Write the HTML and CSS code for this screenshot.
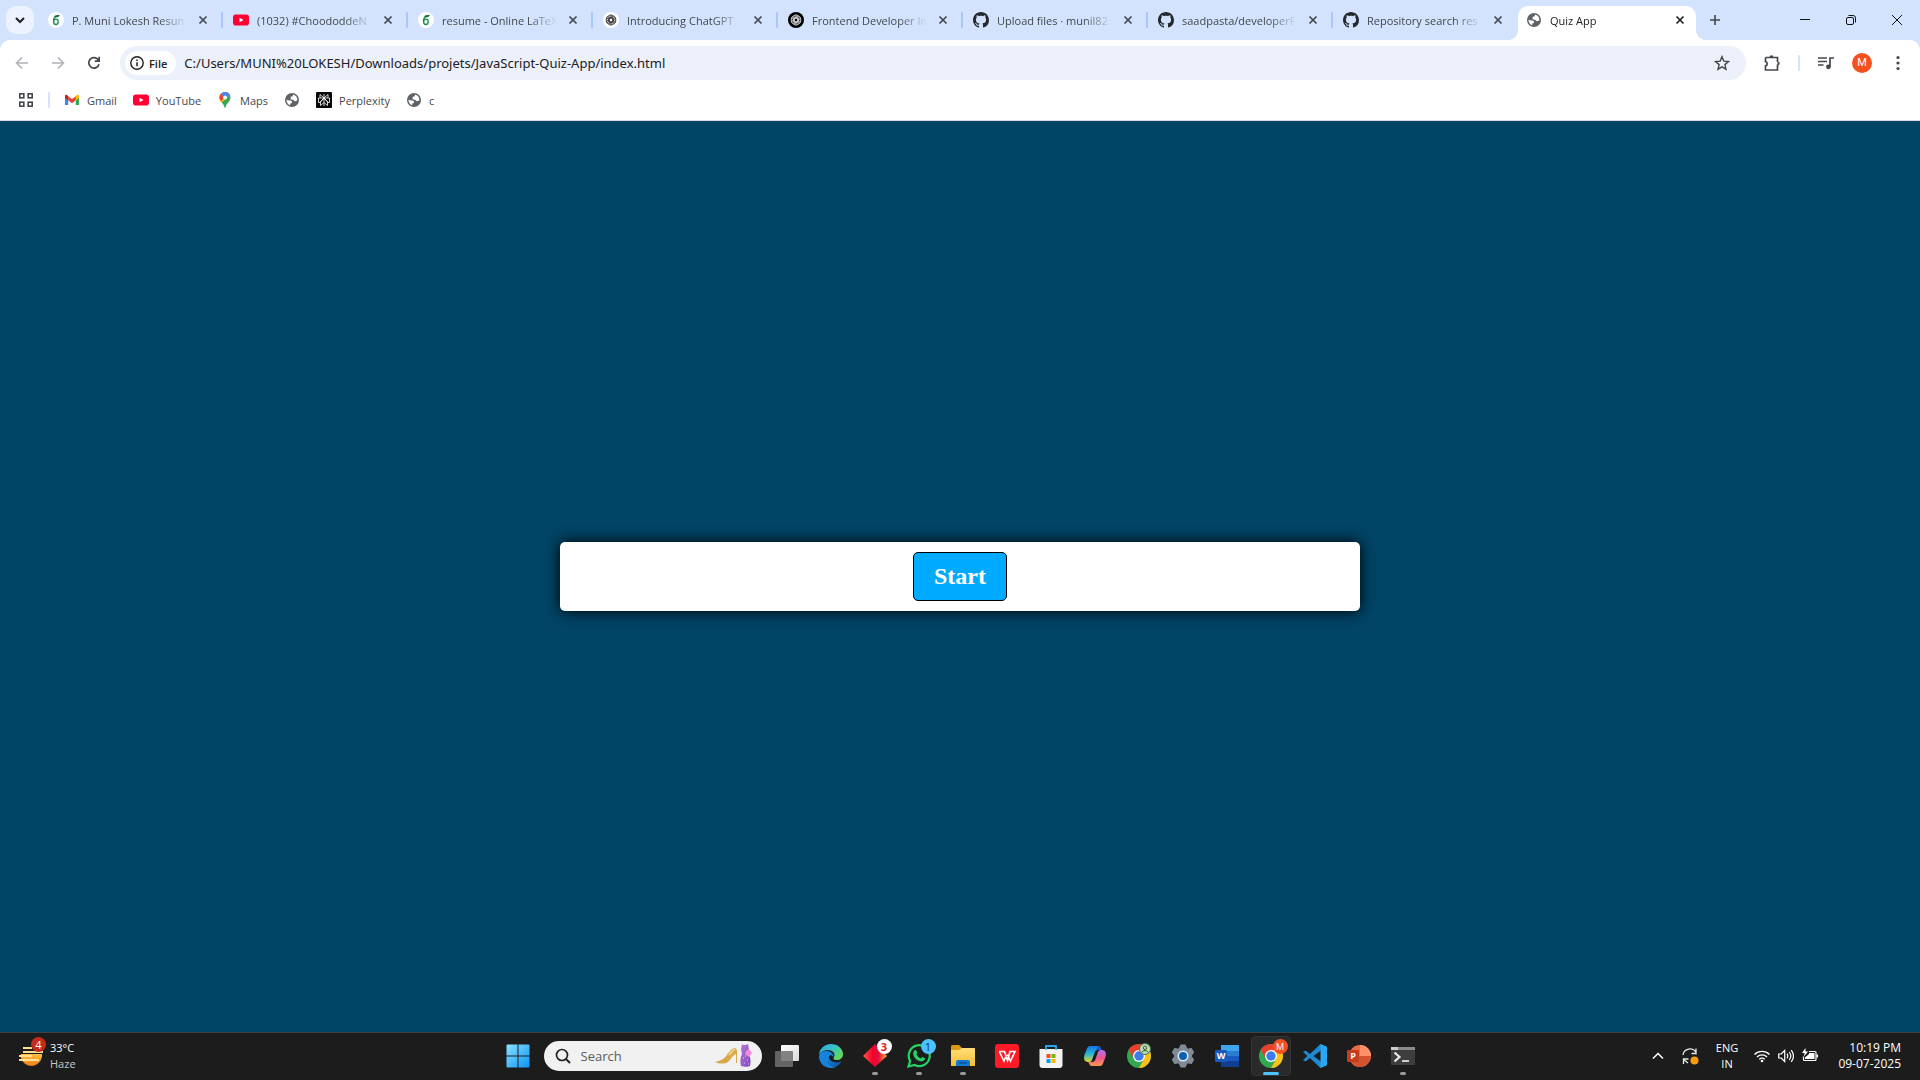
FILE: index.html
```html
<!DOCTYPE html>
<html lang="en">
<head>
<meta charset="utf-8">
<meta name="viewport" content="width=device-width, initial-scale=1">
<title>Quiz App</title>
<link rel="stylesheet" href="styles.css">
</head>
<body>
<svg class="sprite" aria-hidden="true">
  <defs>
    <linearGradient id="win" x1="0" y1="0" x2="1" y2="1"><stop offset="0" stop-color="#8ae2ff"/><stop offset="1" stop-color="#0a94f5"/></linearGradient>
    <linearGradient id="edgeTop" x1="0" y1="0" x2="1" y2="0.6"><stop offset="0" stop-color="#2aa8e0"/><stop offset=".55" stop-color="#35c3c8"/><stop offset="1" stop-color="#62d957"/></linearGradient>
    <linearGradient id="edgeLow" x1="0" y1="0" x2="1" y2="1"><stop offset="0" stop-color="#1c8fe0"/><stop offset="1" stop-color="#0c4f9e"/></linearGradient>
    <linearGradient id="diamond" x1="0" y1="0" x2="1" y2="0"><stop offset="0" stop-color="#ff5a4a"/><stop offset=".4" stop-color="#f5002e"/><stop offset=".65" stop-color="#e0103c"/><stop offset="1" stop-color="#ffb02a"/></linearGradient>
    <linearGradient id="folder" x1="0" y1="0" x2="0" y2="1"><stop offset="0" stop-color="#ffdf7a"/><stop offset="1" stop-color="#f6bd33"/></linearGradient>
    <linearGradient id="cpA" x1="0" y1="0" x2="0" y2="1"><stop offset="0" stop-color="#1573e6"/><stop offset=".5" stop-color="#25b8d4"/><stop offset="1" stop-color="#e7d32c"/></linearGradient>
    <linearGradient id="cpB" x1="0" y1="0" x2="0" y2="1"><stop offset="0" stop-color="#b16df0"/><stop offset=".5" stop-color="#f0568f"/><stop offset="1" stop-color="#ff9a4c"/></linearGradient>
    <linearGradient id="haze" x1="0" y1="0" x2="0" y2="1"><stop offset="0" stop-color="#ffc23c"/><stop offset="1" stop-color="#f07d1a"/></linearGradient>
    <linearGradient id="dress" x1="0" y1="0" x2="1" y2="1"><stop offset="0" stop-color="#b877dc"/><stop offset="1" stop-color="#7c4bb8"/></linearGradient>
    <linearGradient id="front" x1="0" y1="0" x2="1" y2="1"><stop offset="0" stop-color="#fff"/><stop offset="1" stop-color="#dcdcdc"/></linearGradient>
  </defs>
  <symbol id="i-close" viewBox="0 0 16 16"><path d="M4.500 4.500l7 7m0-7l-7 7" stroke="currentColor" stroke-width="1.700" fill="none"/></symbol>
  <symbol id="i-leaf" viewBox="0 0 16 16"><circle cx="8" cy="8" r="8" fill="#fff"/><ellipse cx="7.900" cy="9.800" rx="2.300" ry="2.700" fill="none" stroke="#138a4b" stroke-width="1.300"/><path d="M5.500 9.700C5.200 6.800 6.800 4.700 9.500 3.900" stroke="#138a4b" stroke-width="1.300" fill="none"/><path d="M6 4.300C7.500 2.600 9.500 3.400 11.800 2.700c-.3 1.700-2 2.800-4.300 2.600z" fill="#0d6b38"/></symbol>
  <symbol id="i-youtube" viewBox="0 0 16 16"><rect y="2.500" width="16" height="11" rx="2.800" fill="#ff0033"/><path d="M6.500 5.700v4.600L10.500 8z" fill="#fff"/></symbol>
  <symbol id="i-knot" viewBox="0 0 16 16"><g fill="none" stroke="currentColor" stroke-width=".7"><path id="petal" d="M8 5.900l2.300 1.300V10.500a2.300 2.300 0 0 1-4 1.700M8 5.900L5 7.600v3.200"/><use href="#petal" transform="rotate(60 8 8)"/><use href="#petal" transform="rotate(120 8 8)"/><use href="#petal" transform="rotate(180 8 8)"/><use href="#petal" transform="rotate(240 8 8)"/><use href="#petal" transform="rotate(300 8 8)"/><circle cx="8" cy="8" r="4.900"/></g></symbol>
  <symbol id="i-github" viewBox="0 0 16 16"><path fill="#24292f" d="M8 0C3.580 0 0 3.580 0 8c0 3.540 2.290 6.530 5.470 7.590.4.070.55-.17.550-.38 0-.19-.01-.82-.01-1.490-2.010.37-2.530-.49-2.690-.94-.09-.23-.48-.94-.82-1.130-.28-.15-.68-.52-.01-.53.63-.01 1.080.58 1.230.82.72 1.210 1.870.87 2.330.66.070-.52.280-.87.510-1.070-1.780-.2-3.640-.89-3.640-3.950 0-.87.310-1.590.82-2.150-.08-.2-.36-1.020.080-2.120 0 0 .67-.21 2.200.82.640-.18 1.320-.27 2-.27s1.360.090 2 .27c1.530-1.040 2.200-.82 2.200-.82.440 1.100.16 1.920.080 2.120.51.560.82 1.270.82 2.150 0 3.070-1.870 3.750-3.650 3.950.29.250.540.730.540 1.480 0 1.070-.01 1.930-.01 2.200 0 .21.150.46.550.38A8.010 8.010 0 0 0 16 8c0-4.420-3.580-8-8-8z"/></symbol>
  <symbol id="i-globe" viewBox="0 0 16 16"><circle cx="8" cy="8" r="7" fill="#5f6368"/><path fill="#fff" d="M8.800 2.500C9.200 3.900 8.700 4.500 7.600 4.600c-.9.100-1 .7-.8 1.500.2.700-.2 1-1.100 1.200 1 .4 3.300.1 4 1 .6.900 1.500 1 2.400.8.600-.1.900-.5 1.300-1 0-3-1.800-5.100-4.600-5.600zM2.500 7.500c1 .7 2.100 1.100 3.600 1.100 1.200 0 1.900.7 1.900 1.700 0 .7-.5.900-1.200 1-.5.100-.7.700-.6 1.900-2.200-.6-3.900-3-3.700-5.700z"/></symbol>
  <symbol id="i-chrome" viewBox="0 0 24 24"><circle cx="12" cy="12" r="12" fill="#33a852"/><path d="M12 12L1.610 6A12 12 0 0 1 22.390 6z" fill="#e8402f"/><path d="M12 6h10.390A12 12 0 0 1 12 24l5.200-9z" fill="#fbc116"/><path d="M1.610 6L6.800 15 12 12V6z" fill="#e8402f"/><path d="M1.610 6L6.800 15 12 17.400 9 22 1 16z" fill="#33a852"/><circle cx="12" cy="12" r="6" fill="#fff"/><circle cx="12" cy="12" r="4.700" fill="#3b7ded"/></symbol>
</svg>

<div class="window">
  <header class="chrome">
    <div class="tabstrip">
      <button class="tab-search" aria-label="Search tabs"><svg class="i16" viewBox="0 0 16 16"><path d="M4 6l4 4 4-4" fill="none" stroke="#202124" stroke-width="2"/></svg></button>
      <nav class="tabs" aria-label="Open tabs">
        <div class="tab"><svg class="i16"><use href="#i-leaf"/></svg><span class="tab-title">P. Muni Lokesh Resun</span><button class="tab-close" aria-label="Close"><svg class="i16"><use href="#i-close"/></svg></button></div>
        <div class="tab"><svg class="i16"><use href="#i-youtube"/></svg><span class="tab-title">(1032) #ChoododdeN</span><button class="tab-close" aria-label="Close"><svg class="i16"><use href="#i-close"/></svg></button></div>
        <div class="tab"><svg class="i16"><use href="#i-leaf"/></svg><span class="tab-title">resume - Online LaTeX</span><button class="tab-close" aria-label="Close"><svg class="i16"><use href="#i-close"/></svg></button></div>
        <div class="tab"><svg class="i16 knot"><use href="#i-knot"/></svg><span class="tab-title">Introducing ChatGPT</span><button class="tab-close" aria-label="Close"><svg class="i16"><use href="#i-close"/></svg></button></div>
        <div class="tab"><svg class="i16 knot knot-dark"><use href="#i-knot"/></svg><span class="tab-title">Frontend Developer In</span><button class="tab-close" aria-label="Close"><svg class="i16"><use href="#i-close"/></svg></button></div>
        <div class="tab"><svg class="i16"><use href="#i-github"/></svg><span class="tab-title">Upload files · munil82</span><button class="tab-close" aria-label="Close"><svg class="i16"><use href="#i-close"/></svg></button></div>
        <div class="tab"><svg class="i16"><use href="#i-github"/></svg><span class="tab-title">saadpasta/developerF</span><button class="tab-close" aria-label="Close"><svg class="i16"><use href="#i-close"/></svg></button></div>
        <div class="tab"><svg class="i16"><use href="#i-github"/></svg><span class="tab-title">Repository search res</span><button class="tab-close" aria-label="Close"><svg class="i16"><use href="#i-close"/></svg></button></div>
        <div class="tab active"><svg class="i16"><use href="#i-globe"/></svg><span class="tab-title">Quiz App</span><button class="tab-close" aria-label="Close"><svg class="i16"><use href="#i-close"/></svg></button></div>
      </nav>
      <button class="new-tab" aria-label="New tab"><svg class="i16" viewBox="0 0 16 16"><path d="M8 3v10M3 8h10" stroke="#43474e" stroke-width="1.600"/></svg></button>
      <div class="window-controls">
        <button aria-label="Minimize"><svg class="i16" viewBox="0 0 16 16"><path d="M3 7.500h10" stroke="#111"/></svg></button>
        <button aria-label="Restore"><svg class="i16" viewBox="0 0 16 16"><g fill="none" stroke="#111"><rect x="3.500" y="5.500" width="7" height="7" rx="1.500"/><path d="M5.500 3.500h4.500a2.500 2.500 0 0 1 2.500 2.500v4.500"/></g></svg></button>
        <button aria-label="Close window"><svg class="i16" viewBox="0 0 16 16"><path d="M3 3l10 10M13 3L3 13" stroke="#111"/></svg></button>
      </div>
    </div>

    <div class="toolbar">
      <div class="nav-buttons">
        <button class="muted" aria-label="Back"><svg class="i16" viewBox="0 0 16 16"><path d="M14 8H3M8 2.500L2.500 8 8 13.500" fill="none" stroke="currentColor" stroke-width="1.600"/></svg></button>
        <button class="muted" aria-label="Forward"><svg class="i16" viewBox="0 0 16 16"><path d="M2 8h11M8 2.500L13.500 8 8 13.500" fill="none" stroke="currentColor" stroke-width="1.600"/></svg></button>
        <button aria-label="Reload"><svg class="i16" viewBox="0 0 16 16"><path d="M13 9.200A5.200 5.200 0 1 1 12.300 5M13.200 1.800v4.400H8.800" fill="none" stroke="currentColor" stroke-width="1.700"/></svg></button>
      </div>
      <div class="omnibox">
        <button class="chip"><svg class="i14" viewBox="0 0 14 14"><circle cx="7" cy="7" r="6.200" fill="none" stroke="#202124" stroke-width="1.400"/><path d="M7 6.200v4M7 3.500v1.500" stroke="#202124" stroke-width="1.500"/></svg>File</button>
        <input class="url" type="text" aria-label="Address" value="C:/Users/MUNI%20LOKESH/Downloads/projets/JavaScript-Quiz-App/index.html">
        <button class="star" aria-label="Bookmark this page"><svg class="i16" viewBox="0 0 16 16"><path d="M8 1.700l1.800 4.400 4.700.4-3.600 3.100 1.100 4.600L8 11.800l-4 2.400 1.100-4.600L1.500 6.500l4.700-.4z" fill="none" stroke="#43474e" stroke-width="1.400"/></svg></button>
      </div>
      <div class="tools">
        <button aria-label="Extensions"><svg class="i18" viewBox="0 0 18 18"><path d="M2.500 3.500h12V8M14.500 10.500v5.500h-12v-4.200c2.300-.3 2.300-3.800 0-4.100V3.500" fill="none" stroke="#43474e" stroke-width="1.700"/><path d="M6.500 3.500a2 2.200 0 0 1 4 0zM14.500 7.500a2.200 2 0 0 1 0 4z" fill="#43474e"/></svg></button>
        <span class="divider"></span>
        <button aria-label="Media controls"><svg class="i16" viewBox="0 0 16 16"><path d="M0 3h9M0 6.500h9M0 10h5.500M12 12V3h4" fill="none" stroke="#43474e" stroke-width="1.700"/><circle cx="10.400" cy="11.800" r="2.400" fill="#43474e"/></svg></button>
        <button aria-label="Profile"><span class="avatar">M</span></button>
        <button aria-label="Menu"><svg class="i16" viewBox="0 0 16 16"><g fill="#43474e"><circle cx="8" cy="2.500" r="1.600"/><circle cx="8" cy="8" r="1.600"/><circle cx="8" cy="13.500" r="1.600"/></g></svg></button>
      </div>
    </div>

    <nav class="bookmarks" aria-label="Bookmarks">
      <button class="apps" aria-label="Apps"><svg class="i16" viewBox="0 0 16 16"><g fill="none" stroke="#43474e" stroke-width="1.600"><rect x="1.800" y="1.800" width="4" height="4"/><rect x="10.200" y="1.800" width="4" height="4"/><rect x="1.800" y="10.200" width="4" height="4"/><rect x="10.200" y="10.200" width="4" height="4"/></g></svg></button>
      <span class="divider"></span>
      <a href="#gmail"><svg class="i16" viewBox="0 0 16 16"><path d="M1 4v9h3.200V6.500z" fill="#4285f4"/><path d="M15 4v9h-3.200V6.500z" fill="#34a853"/><path d="M11.800 4.200V8.300L15 5.900V4c0-1.600-1.800-1.900-3.200 0z" fill="#fbbc04"/><path d="M1 4v1.900l3.200 2.400V4.200C3 2.400 1 2.400 1 4z" fill="#c5221f"/><path d="M4.200 4.200v4.100L8 11.200l3.800-2.900V4.200L8 7z" fill="#ea4335"/></svg>Gmail</a>
      <a href="#youtube"><svg class="i16"><use href="#i-youtube"/></svg>YouTube</a>
      <a href="#maps"><svg class="i16" viewBox="0 0 16 16"><path d="M2.500 5.500a5.500 5.500 0 0 1 11 0c0 4-4.200 5.500-5 10-.2.600-.8.600-1 0-.8-4.500-5-6-5-10z" fill="#34a853"/><path d="M8 0a5.500 5.500 0 0 1 5.200 3.700L4.600 10.500C3.500 9 2.500 7.500 2.500 5.500 2.500 2.300 5 0 8 0z" fill="#fbbc04"/><path d="M8 0a5.500 5.500 0 0 1 5.200 3.700L8 7.500 3.800 2A5.500 5.500 0 0 1 8 0z" fill="#4285f4"/><path d="M3.800 2L8 5.500 4 9C3 7.800 2.500 7 2.500 5.500c0-1.400.5-2.600 1.300-3.500z" fill="#ea4335"/><circle cx="8" cy="5.500" r="2" fill="#fff"/></svg>Maps</a>
      <a href="#site" aria-label="Site"><svg class="i16"><use href="#i-globe"/></svg></a>
      <a href="#perplexity"><svg class="i16" viewBox="0 0 16 16"><rect width="16" height="16" rx="1" fill="#080808"/><g fill="none" stroke="#fff" stroke-width=".8"><path d="M8 2v12M8 6L4 2.500V6h8V2.500L8 6M8 6l-4.500 4.500M8 6l4.500 4.500M4.500 13.500V10L8 6.500l3.500 3.500v3.500L8 10.500zM4.500 10.500h-2V6H4M11.500 10.500h2V6H12"/></g></svg>Perplexity</a>
      <a href="#c"><svg class="i16"><use href="#i-globe"/></svg>c</a>
    </nav>
  </header>

  <main class="page">
    <section class="quiz-card"><button class="start-quiz">Start</button></section>
  </main>

  <footer class="taskbar">
    <button class="weather">
      <span class="weather-icon"><svg class="i26" viewBox="0 0 26 26"><path d="M3 11h21a11 11 0 0 1-10 12A11 10 0 0 1 3 15z" fill="url(#haze)"/><path d="M5 5h9M5 9h20M1 13h13M1 17h20" stroke="#ffdf94" stroke-width="1.800"/></svg><span class="badge red">4</span></span>
      <span class="weather-text"><span>33°C</span><span class="dim">Haze</span></span>
    </button>

    <div class="apps-row">
      <button class="app" aria-label="Start menu"><svg class="i24" viewBox="0 0 24 24"><path fill="url(#win)" d="M1.500 .5H11.500v11H.5V1.500a1 1 0 0 1 1-1zM12.500 .5h10a1 1 0 0 1 1 1v10h-11zM.5 12.500h11v11h-10a1 1 0 0 1-1-1zM12.500 12.500h11v10a1 1 0 0 1-1 1h-10z"/></svg></button>
      <label class="search">
        <svg class="i16" viewBox="0 0 16 16"><circle cx="7" cy="7" r="5.500" fill="none" stroke="#222" stroke-width="1.700"/><path d="M11 11l4 4" stroke="#222" stroke-width="2"/></svg>
        <input type="text" placeholder="Search" aria-label="Search">
        <svg class="fashion" viewBox="0 0 40 24"><path d="M1 18c5-1 9-3 12-7 2-3 5-7 8-7 2 1 2 2 2 4v11h-1v-9c-3 1-5 5-8 8-3 2-9 2-13 0z" fill="#dba94b"/><path d="M15 11c2-2 3-4 6-6" stroke="#f4d992" stroke-width="1.500" fill="none"/><path d="M28 0c1 1.500 4 1.500 6 0l1 6-1 4c3 3 3 8 2 12-2 1-6 1-9 0-1-4-1-8 1-12l-1-5z" fill="url(#dress)"/><path d="M33 6c2-1 4 0 5 3l-3 4-4-3z" fill="#f08edc"/><path d="M29 14h1M33 16h1M30 19h1M34 20h1M31 12h1" stroke="#e3c5f7" stroke-width="1"/></svg>
      </label>
      <button class="app" aria-label="Task view"><svg class="i24" viewBox="0 0 24 24"><rect x="6" y="1" width="18" height="16" rx="1" fill="url(#front)"/><rect y="7" width="18" height="16" rx="1" fill="#707070" fill-opacity=".86"/></svg></button>
      <button class="app" aria-label="Edge"><svg class="i24" viewBox="0 0 24 24"><path d="M0 12C0 5 5 0 12 0s12 5 12 10c0 4-3 6-6 6-4 0-4-2-3-3 2-4-2-7-6-7-5 0-9 3-9 6z" fill="url(#edgeTop)"/><path d="M0 12c1-4 4-5 7-5 5 0 8 3 7 6-1-3-6-2-6 2 0 5 5 8 9 8-2 1-4 1-5 1C5 24 0 19 0 12z" fill="#1583dc"/><path d="M9 11c-4 6 1 12 7 12 3-1 5-3 7-6-5 3-13 1-13-4 0-1 1-2 2-3-1 0-2 0-3 1z" fill="url(#edgeLow)"/></svg></button>
      <button class="app running" aria-label="Diamond"><svg class="i24" viewBox="0 0 24 24"><path d="M12 0l12 12-12 11L0 12z" fill="url(#diamond)"/></svg><span class="badge white">3</span></button>
      <button class="app running" aria-label="WhatsApp"><svg class="i24" viewBox="0 0 24 24"><path d="M1.500 22.500l1.600-5.700A10.500 10.500 0 1 1 7.500 21z" fill="none" stroke="#25d366" stroke-width="2.200"/><path d="M7.500 6.500c.7-.7 1.500-.6 1.900.2l.9 2-1 1.500c1 2 2.500 3.300 4.500 4.200l1.500-1.500 2.300 1.200c.7.400.4 1.400-.1 2-3 3-7.800.4-9.500-2C6 11.500 5.500 8.500 7.500 6.500z" fill="#25d366"/></svg><span class="badge blue">1</span></button>
      <button class="app running" aria-label="File Explorer"><svg class="i24" viewBox="0 0 24 24"><path d="M0 2.500A1.500 1.500 0 0 1 1.500 1H8l3 3h11.500A1.500 1.500 0 0 1 24 5.500V9H0z" fill="#dc9a12"/><path d="M0 6h8l3-2h12a1 1 0 0 1 1 1v17H0z" fill="url(#folder)"/><path d="M5 22v-4a2 2 0 0 1 2-2h10a2 2 0 0 1 2 2v4z" fill="#117ad1"/><path d="M8 19h8" stroke="#0b4f94" stroke-width="1.500"/></svg></button>
      <button class="app" aria-label="WPS Office"><svg class="i24" viewBox="0 0 24 24"><rect width="24" height="24" rx="3" fill="#ff1a28"/><path d="M4 7.500h5.500l3 9 2.500-9h5l-4.500 9.500-3-6.500M4.500 8l4.500 9 2.500-6" fill="none" stroke="#fff" stroke-width="1.600"/></svg></button>
      <button class="app" aria-label="Microsoft Store"><svg class="i24" viewBox="0 0 24 24"><path d="M7 6V2.500A.5.500 0 0 1 7.500 2h9a.5.500 0 0 1 .5.500V6" fill="none" stroke="#26a4ed" stroke-width="1.800"/><path d="M.5 5h23v16a3 3 0 0 1-3 3h-17a3 3 0 0 1-3-3z" fill="#f2f2f2"/><path d="M7 1v5M17 1v5" stroke="#26a4ed" stroke-width="1.500"/><path d="M7.500 10h4v4h-4z" fill="#f05022"/><path d="M12.500 10h4v4h-4z" fill="#7cb800"/><path d="M7.500 15h4v4h-4z" fill="#00a3ee"/><path d="M12.500 15h4v4h-4z" fill="#fcb500"/></svg></button>
      <button class="app" aria-label="Copilot"><svg class="i24" viewBox="0 0 24 24"><path d="M7 2h8c2 0 3 2 3.500 4H15c-2 0-3 1-3.500 3L9 16c-1 2-2 2-4 2-4 0-4.500-4-3.500-7L4 4.500C4.500 3 5.500 2 7 2z" fill="url(#cpA)"/><path d="M17 22H9c-2 0-3-2-3.500-4H9c2 0 3-1 3.500-3L15 8c1-2 2-2 4-2 4 0 4.500 4 3.500 7L20 19.500c-.5 1.500-1.500 2.500-3 2.500z" fill="url(#cpB)"/><path d="M15 2c2 0 3 2 3.500 4H15c-1.500 0-2.500.5-3 2z" fill="#1658cc"/></svg></button>
      <button class="app" aria-label="Chrome"><svg class="i24"><use href="#i-chrome"/></svg><svg class="person" viewBox="0 0 12 12"><circle cx="6" cy="6" r="5.500" fill="#bfdcb8" stroke="#4a7548"/><circle cx="6" cy="4.800" r="1.700" fill="none" stroke="#365c35"/><path d="M2.700 9.500c1-2.500 5.600-2.500 6.600 0" fill="none" stroke="#365c35"/></svg></button>
      <button class="app" aria-label="Settings"><svg class="i24" viewBox="0 0 24 24"><g fill="#7f8b96"><circle cx="12" cy="12" r="9"/><path id="tooth" d="M8 4L9.500 .5h5L16 4zM8 20l1.500 3.500h5L16 20z"/><use href="#tooth" transform="rotate(60 12 12)"/><use href="#tooth" transform="rotate(120 12 12)"/></g><circle cx="12" cy="12" r="5.500" fill="#e3eaf0"/><circle cx="12" cy="12" r="4" fill="#0c62b0"/></svg></button>
      <button class="app" aria-label="Word"><svg class="i24" viewBox="0 0 24 24"><path d="M6 1h18v6H6z" fill="#41a5ee"/><path d="M6 7h18v5H6z" fill="#2b7cd3"/><path d="M6 12h18v5H6z" fill="#185abd"/><path d="M6 17h18v6H6z" fill="#103f91"/><rect y="6" width="12" height="12" rx="1" fill="#185abd"/><text x="6" y="15" class="glyph">W</text></svg></button>
      <button class="app current" aria-label="Chrome, profile M"><svg class="i24"><use href="#i-chrome"/></svg><span class="badge orange">M</span></button>
      <button class="app" aria-label="Visual Studio Code"><svg class="i24" viewBox="0 0 24 24"><path d="M17.500 0L24 3v18l-6.500 3L7 14 2.500 17.500 0 16l4.500-4L0 8l2.500-1.500L7 10zM18 6.500L10.500 12l7.500 5.500z" fill="#1f8ad2" fill-rule="evenodd"/><path d="M17.500 0L24 3v18l-6.500 3z" fill="#2aa7f2"/></svg></button>
      <button class="app" aria-label="PowerPoint"><svg class="i24" viewBox="0 0 24 24"><circle cx="13" cy="12" r="11" fill="#ed6c47"/><path d="M13 1a11 11 0 0 1 11 11H13z" fill="#ff8f6b"/><path d="M2 12h22a11 11 0 0 1-22 0z" fill="#d35230"/><rect y="6" width="12" height="12" rx="1" fill="#c43e1c"/><text x="6" y="15" class="glyph">P</text></svg></button>
      <button class="app running" aria-label="Terminal"><svg class="i24" viewBox="0 0 24 24"><rect y="3" width="24" height="18" rx="1" fill="#3d3d3d"/><path d="M0 3h24v3H0z" fill="#8a8a8a"/><path d="M0 3h7v3H0z" fill="#ccc"/><path d="M3.500 8.500l5 4.500-5 4.500" fill="none" stroke="#e8e8e8" stroke-width="2.200"/><path d="M11 17h7" stroke="#fff" stroke-width="1.500"/></svg></button>
    </div>

    <div class="tray">
      <button class="tray-button" aria-label="Show hidden icons"><svg class="i16" viewBox="0 0 16 16"><path d="M3 10.500l5-5 5 5" fill="none" stroke="#fff" stroke-width="1.500"/></svg></button>
      <button class="tray-button" aria-label="Updates"><svg class="i18" viewBox="0 0 18 18"><path d="M2 8a7 7 0 0 1 13-2.500V1.500M15.500 6.500h-5M2.500 17v-5h5M2.500 12.500L7 16" fill="none" stroke="#e8e8e8" stroke-width="1.300"/><circle cx="13.500" cy="13.500" r="4" fill="#ff9a0c"/></svg></button>
      <button class="lang"><span>ENG</span><span>IN</span></button>
      <button class="status" aria-label="Network, volume and battery">
        <svg class="i16" viewBox="0 0 16 16"><path d="M.5 6.500a10.600 10.600 0 0 1 15 0M3 9a7 7 0 0 1 10 0M5.300 11.300a3.800 3.800 0 0 1 5.400 0" fill="none" stroke="#fff" stroke-width="1.300"/><circle cx="8" cy="13" r="1.300" fill="#fff"/></svg>
        <svg class="i16" viewBox="0 0 16 16"><path d="M.7 6v4h2.500L6.700 13.500v-11L3.200 6zM9 5.700c1 1.500 1 3.100 0 4.600M11.200 4c2 2.500 2 5.500 0 8M13.200 2.200c2.800 3.500 2.800 8 0 11.600" fill="none" stroke="#fff" stroke-width="1.200"/></svg>
        <svg class="i16" viewBox="0 0 16 16"><path d="M7 3.500h6a1 1 0 0 1 1 1v7a1 1 0 0 1-1 1H2.500a1 1 0 0 1-1-1V8.500" fill="none" stroke="#fff" stroke-width="1.200"/><path d="M7 5h5.500v6H3V9.500L7 6z" fill="#fff"/><path d="M14.500 6.500H16v3h-1.500z" fill="#fff"/><path d="M3.500 0L0 5h2.500L2 8.500 6 3.500H3.500z" fill="#fff"/></svg>
      </button>
      <button class="clock"><span>10:19 PM</span><span>09-07-2025</span></button>
    </div>
  </footer>
</div>
</body>
</html>
```
FILE: styles.css
```css
* { box-sizing: border-box; }

body {
  margin: 0;
  font-family: "Open Sans", "Noto Sans", sans-serif;
  font-size: 11px;
  color: #202124;
}

button {
  display: flex;
  align-items: center;
  justify-content: center;
  margin: 0;
  padding: 0;
  border: 0;
  background: none;
  color: inherit;
  font: inherit;
}

input {
  min-width: 0;
  padding: 0;
  border: 0;
  outline: 0;
  background: none;
  color: inherit;
  font: inherit;
}

svg { display: block; flex: none; }
.sprite { position: absolute; width: 0; height: 0; }
.i14 { width: 14px; height: 14px; }
.i16 { width: 16px; height: 16px; }
.i18 { width: 18px; height: 18px; }
.i24 { width: 24px; height: 24px; }
.i26 { width: 26px; height: 26px; }

.window {
  display: flex;
  flex-direction: column;
  min-height: 100vh;
}

/* Browser frame */
.chrome {
  background: #d3e3fd;
  border-bottom: 1px solid #dadce0;
}

.tabstrip {
  display: flex;
  align-items: center;
  height: 40px;
  padding-left: 6px;
}

.tab-search {
  flex: none;
  width: 28px;
  height: 28px;
  margin-right: 4px;
  border-radius: 10px;
  background: #ecf2fe;
}

.tabs { display: flex; flex: 1; align-self: stretch; min-width: 0; max-width: 1658px; }

.tab {
  display: flex;
  flex: 0 1 185px;
  align-items: center;
  gap: 8px;
  min-width: 0;
  padding: 0 10px;
  color: #43474e;
}

.tab:not(.active)::after {
  content: "";
  flex: none;
  width: 2px;
  height: 16px;
  margin-right: -10px;
  border-radius: 1px;
  background: #a8c7fa;
}

.tab:nth-child(8)::after { visibility: hidden; }

.tab-title {
  flex: 1;
  overflow: hidden;
  white-space: nowrap;
  mask-image: linear-gradient(to right, #000 calc(100% - 28px), transparent);
}

.tab-close { flex: none; width: 16px; height: 16px; margin-right: 2px; color: #43474e; }

.active {
  position: relative;
  flex-basis: 178px;
  align-self: flex-end;
  height: 34px;
  padding: 0 8px 6px;
  border-radius: 10px 10px 0 0;
  background: #fff;
  color: #202124;
}

.active .tab-close { margin-right: 0; color: #202124; }

.active::before,
.active::after {
  content: "";
  position: absolute;
  bottom: 0;
  width: 10px;
  height: 10px;
}

.active::before { right: 100%; background: radial-gradient(circle at 0 0, transparent 10px, #fff 10px); }
.active::after { left: 100%; background: radial-gradient(circle at 100% 0, transparent 10px, #fff 10px); }

.knot { border-radius: 50%; background: #fff; color: #333; }
.knot-dark { background: #000; color: #ddd; }

.new-tab { flex: none; width: 28px; height: 28px; margin-left: 5px; }

.window-controls { display: flex; align-self: stretch; margin-left: auto; }
.window-controls button { width: 46px; }

.toolbar {
  display: flex;
  align-items: center;
  padding: 6px 4px 0;
  border-radius: 10px 10px 0 0;
  background: #fff;
}

.nav-buttons { display: flex; }
.nav-buttons button,
.tools button { width: 36px; height: 34px; color: #43474e; }
.nav-buttons .muted { color: #b0b3b8; }

.omnibox {
  display: flex;
  flex: 1;
  align-items: center;
  height: 34px;
  margin-left: 8px;
  padding: 0 16px 0 5px;
  border-radius: 17px;
  background: #ecf0fa;
}

.chip {
  gap: 5px;
  height: 24px;
  margin-right: 8px;
  padding: 0 9px 0 5px;
  border-radius: 12px;
  background: #fff;
  font-weight: 600;
}

.url { flex: 1; font-family: "Noto Sans", "Open Sans", sans-serif; font-size: 13px; }

.tools { display: flex; align-items: center; padding-left: 8px; }
.divider { width: 2px; height: 16px; margin: 0 8px; border-radius: 1px; background: #d3e3fd; }

.avatar {
  width: 20px;
  height: 20px;
  border-radius: 50%;
  background: #f4511e;
  color: #fff;
  font: 11px/20px Roboto, sans-serif;
}

.bookmarks {
  display: flex;
  align-items: center;
  height: 40px;
  padding-left: 18px;
  background: #fff;
}

.bookmarks .divider { margin: 0 14px; }
.bookmarks a {
  display: flex;
  align-items: center;
  gap: 7px;
  margin-right: 16px;
  color: #43474e;
  text-decoration: none;
}

/* Quiz page */
.page {
  display: flex;
  flex: 1;
  align-items: center;
  justify-content: center;
  background: #004466;
}

.quiz-card {
  display: flex;
  justify-content: center;
  width: 800px;
  max-width: 90%;
  padding: 10px;
  border-radius: 5px;
  background: #fff;
  box-shadow: 0 0 15px #000;
}

.start-quiz {
  padding: 10px 20px;
  border: 1px solid #000;
  border-radius: 5px;
  background: #00aaff;
  color: #fff;
  font: bold 24px/27px "Liberation Serif", serif;
}

/* Taskbar */
.taskbar {
  display: grid;
  grid-template-columns: 1fr auto 1fr;
  align-items: center;
  height: 48px;
  padding-bottom: 2px;
  border-top: 1px solid #3d4245;
  background: #1c1c1c;
  color: #fff;
}

.weather { justify-self: start; gap: 6px; padding-left: 18px; }
.weather-icon { position: relative; }
.weather-text { display: flex; flex-direction: column; line-height: 16px; text-align: left; }
.dim { color: #c8c8c8; }

.apps-row { display: flex; align-items: center; }

.app {
  position: relative;
  width: 40px;
  height: 40px;
  margin: 0 2px;
  border-radius: 4px;
}

.app.running::after,
.app.current::after {
  content: "";
  position: absolute;
  bottom: 1px;
  width: 6px;
  height: 3px;
  border-radius: 2px;
  background: #9a9a9a;
}

.app.current { background: #2a2a2a; border: 1px solid #333; }
.app.current::after { bottom: 0; width: 16px; background: #4cc2ff; }

.search {
  display: flex;
  align-items: center;
  gap: 10px;
  width: 218px;
  height: 30px;
  margin: 0 3px 0 4px;
  padding: 0 8px 0 11px;
  border-radius: 15px;
  background: #f1f1f1;
}

.search input { flex: 1; font-size: 13px; }
.search input::placeholder { color: #5c5c5c; opacity: 1; }
.fashion { width: 40px; height: 24px; }

.badge {
  position: absolute;
  top: 3px;
  right: 3px;
  width: 15px;
  height: 15px;
  border-radius: 50%;
  font-size: 11px;
  line-height: 15px;
  text-align: center;
}

.red { top: -6px; right: -2px; background: #c42b1c; }
.white { background: #fff; color: #e81123; font-weight: 700; }
.blue { background: #4cc2ff; color: #003a5c; }
.orange { top: 2px; right: 2px; background: #f4511e; font-size: 9px; }

.person { position: absolute; top: 7px; right: 8px; width: 12px; height: 12px; }
.glyph { fill: #fff; font-size: 9px; font-weight: 700; text-anchor: middle; }

.tray { display: flex; justify-self: end; align-items: center; padding-right: 19px; }
.tray-button { width: 32px; height: 40px; }
.lang,
.clock { flex-direction: column; line-height: 16px; }
.lang { width: 42px; }
.status { gap: 8px; width: 76px; height: 40px; }
.clock { align-items: flex-end; min-width: 77px; font-size: 12px; line-height: 16px; }
```
